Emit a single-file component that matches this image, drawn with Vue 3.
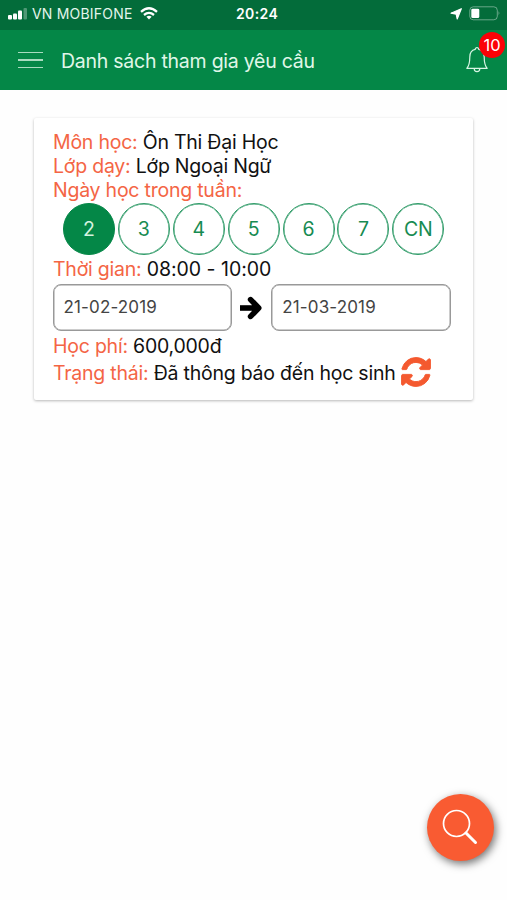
<script setup>
import { ref } from 'vue'

const days = ['2', '3', '4', '5', '6', '7', 'CN']
const selected = ref('2')
</script>

<template>
  <div class="screen">
    <div class="status">
      <div class="carrier">
        <svg class="signal" width="20" height="12" viewBox="0 0 20 12" fill="#fff">
          <rect x="0" y="7" width="4" height="4.5" rx="1" />
          <rect x="5" y="5.500" width="4" height="6" rx="1" />
          <rect x="10" y="2.5" width="4" height="9" rx="1" />
          <rect x="15.5" y="0" width="3.5" height="11.5" rx="1" opacity=".3" />
        </svg>
        <span class="carrier-name">VN MOBIFONE</span>
        <svg class="wifi" width="18" height="13" viewBox="0 0 18 13" fill="none" stroke="#fff" stroke-width="2.3">
          <path d="M1 4.8Q9-2.2 17 4.8" />
          <path d="M4 8Q9 3.8 14 8" />
          <path d="M6.4 9.8Q9 7.8 11.6 9.8L9 12.5z" fill="#fff" stroke="none" />
        </svg>
      </div>
      <div class="clock">20:24</div>
      <div class="power">
        <svg width="12" height="12" viewBox="0 0 12 12" fill="#fff"><path d="M11.3.7 7.2 11 6.2 6.2 1 5.2z" stroke="#fff" stroke-linejoin="round" stroke-width="1.2" /></svg>
        <svg width="32" height="15" viewBox="0 0 32 15">
          <rect x=".8" y=".8" width="27.500" height="13" rx="3.5" fill="none" stroke="#fff" stroke-opacity=".4" />
          <rect x="2.3" y="2.7" width="8" height="9.4" rx="1.4" fill="#fff" />
          <path d="M29.600 5q1.8 2.2 0 4.5z" fill="#fff" opacity=".5" />
        </svg>
      </div>
    </div>

    <header class="bar">
      <div class="menu"><i></i><i></i><i></i></div>
      <h1>Danh sách tham gia yêu cầu</h1>
      <div class="bell">
        <svg width="22" height="26" viewBox="0 0 22 26" fill="none" stroke="#d8f5e4" stroke-width="1.2">
          <path d="M9.2 2.4a1.8 1.8 0 0 1 3.6 0C17 3.3 18.2 6.300 18.200 10C18.200 16 18.700 18.600 21.200 21.300H.8C3.300 18.600 3.800 16 3.800 10C3.800 6.300 5 3.300 9.200 2.400z" stroke-linejoin="round" />
          <path d="M8.200 21.500a2.800 3.200 0 0 0 5.600 0" />
        </svg>
        <span class="badge">10</span>
      </div>
    </header>

    <main class="card">
      <p class="row"><b>Môn học:</b> <span>Ôn Thi Đại Học</span></p>
      <p class="row"><b>Lớp dạy:</b> <span>Lớp Ngoại Ngữ</span></p>
      <p class="row"><b>Ngày học trong tuần:</b></p>
      <div class="days">
        <button v-for="d in days" :key="d" :class="{ on: d === selected }" @click="selected = d">{{ d }}</button>
      </div>
      <p class="row time"><b>Thời gian:</b> <span class="hours">08:00 - 10:00</span></p>
      <div class="dates">
        <div class="date">21-02-2019</div>
        <svg width="23" height="24" viewBox="0 0 23 24" fill="none" stroke="#000" stroke-width="5.600">
          <path d="M0 12H18" />
          <path d="M10.600 3.600 18.700 12 10.600 20.400" stroke-linecap="round" stroke-linejoin="round" />
          <path d="M12 6 18 12 12 18z" fill="#000" stroke="none" />
        </svg>
        <div class="date">21-03-2019</div>
      </div>
      <p class="row fee"><b>Học phí:</b> <span>600,000đ</span></p>
      <div class="state">
        <p class="row"><b>Trạng thái:</b> <span>Đã thông báo đến học sinh</span></p>
        <svg width="30" height="30" viewBox="-30 98 1596 1596" fill="#f4592f" stroke="#f4592f" stroke-width="50" stroke-linejoin="round">
          <path d="M1511 1056q0 5-1 7-64 268-268 434.500t-478 166.500q-146 0-282.500-55t-243.500-157l-129 129q-19 19-45 19t-45-19-19-45v-448q0-26 19-45t45-19h448q26 0 45 19t19 45-19 45l-137 137q71 66 161 102t187 36q134 0 250-65t186-179q11-17 53-117 8-23 30-23h192q13 0 22.500 9.500t9.500 22.500zm25-800v448q0 26-19 45t-45 19h-448q-26 0-45-19t-19-45 19-45l138-138q-148-137-349-137-134 0-250 65t-186 179q-11 17-53 117-8 23-30 23h-199q-13 0-22.500-9.500t-9.500-22.500v-7q65-268 270-434.500t480-166.500q146 0 284 55.500t245 156.500l130-129q19-19 45-19t45 19 19 45z" />
        </svg>
      </div>
    </main>

    <button class="fab" aria-label="Tìm kiếm">
      <svg width="36" height="36" viewBox="0 0 36 36" fill="none" stroke="#fff">
        <circle cx="14.500" cy="14.500" r="13" stroke-width="1.700" />
        <path d="M24 24 33.500 33.500" stroke-width="3" stroke-linecap="round" />
      </svg>
    </button>
  </div>
</template>

<style>
body { margin: 0; background: #fff; }
</style>

<style scoped>
.screen {
  position: relative;
  height: 900px;
  overflow: hidden;
  background: #fefefe;
  font-family: Inter, "Noto Sans", sans-serif;
  color: #111;
}
.status {
  display: grid;
  grid-template-columns: 228px auto 1fr;
  align-items: center;
  height: 30px;
  padding: 0 6px 3px 8px;
  box-sizing: border-box;
  background: #036c3a;
  color: #fff;
}
.carrier { display: flex; align-items: center; }
.carrier-name { margin-left: 4px; font-size: 14px; letter-spacing: .2px; color: #e4f5ec; white-space: nowrap; }
.wifi { margin-left: 7px; }
.clock { font-size: 14px; font-weight: 600; letter-spacing: .4px; }
.power { display: flex; align-items: center; justify-content: flex-end; gap: 7px; }
.bar {
  display: flex;
  align-items: center;
  height: 60px;
  padding: 0 19px 0 18px;
  box-sizing: border-box;
  background: #048747;
}
.menu { display: flex; flex-direction: column; gap: 6px; width: 25px; }
.menu i { height: 1.500px; background: #a9dcc0; }
h1 { flex: 1; margin: 1px 0 0 18px; font-size: 19.500px; font-weight: 400; letter-spacing: -.25px; color: #e0f7e9; white-space: nowrap; }
.bell { position: relative; height: 26px; }
.bell svg { display: block; }
.badge {
  position: absolute;
  left: 13px;
  top: -15px;
  width: 26px;
  height: 26px;
  border-radius: 50%;
  background: #fb0207;
  color: #fff;
  font-size: 16.500px;
  line-height: 26px;
  text-align: center;
}
.card {
  margin: 28px 34px 0;
  height: 282px;
  padding: 12px 22px 0 19px;
  box-sizing: border-box;
  background: #fff;
  border-radius: 2px;
  box-shadow: 0 1px 3px rgba(0, 0, 0, .28);
}
.row { margin: 0; height: 24px; font-size: 19.500px; line-height: 24px; letter-spacing: -.23px; white-space: nowrap; }
.row b { font-weight: 400; color: #f46545; }
.hours { letter-spacing: -.03px; }
.days { display: flex; gap: 2.900px; margin: 1px 0 0 10px; }
.days button {
  flex: none;
  width: 52px;
  height: 52px;
  padding: 0;
  box-sizing: border-box;
  border: 1px solid #2f9b68;
  box-shadow: inset 0 0 0 .5px #2f9b68;
  border-radius: 50%;
  background: #fff;
  color: #178b52;
  font: 19.500px Inter, sans-serif;
}
.days button.on { background: #048747; border-color: #048747; box-shadow: none; color: #d5f3e0; }
.time { margin-top: 2px; }
.dates { display: flex; align-items: center; gap: 8px; margin: 3px 0 0 -.5px; }
.date {
  flex: 1;
  height: 47px;
  padding-left: 10px;
  box-sizing: border-box;
  border: 1px solid #999;
  box-shadow: inset 0 0 0 .5px #999;
  border-radius: 8px;
  color: #444;
  font-size: 17px;
  line-height: 45px;
  letter-spacing: .15px;
}
.fee { margin-top: 3px; }
.state { display: flex; align-items: center; gap: 5px; }
.state svg { margin-top: -1px; }
.fab {
  position: absolute;
  left: 427px;
  top: 794px;
  width: 67px;
  height: 67px;
  padding: 0 2px 2px 0;
  display: grid;
  place-items: center;
  border: 0;
  border-radius: 50%;
  background: #f95b32;
  box-shadow: 2px 3px 8px rgba(0, 0, 0, .55);
}
</style>
